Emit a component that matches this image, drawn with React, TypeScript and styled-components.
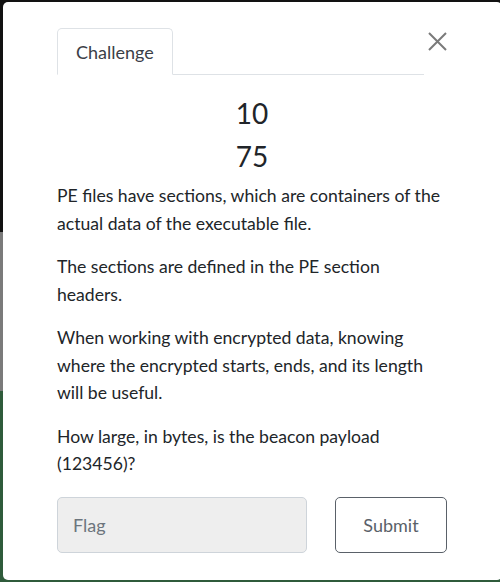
import React from "react";
import styled, { createGlobalStyle } from "styled-components";

const Global = createGlobalStyle`
  html, body { margin: 0; padding: 0; }
  body { font-family: Lato, "Noto Sans", sans-serif; background: #111; }
  * { box-sizing: border-box; }
`;

const Backdrop = styled.div`
  width: 500px;
  height: 582px;
  display: flex;
  padding: 2px 2px 2px 3px;
  background:
    linear-gradient(to bottom, #121212 0px, #121212 232px, #7a7a7a 232px, #7a7a7a 391px, #2f5b3b 391px, #2f5b3b 100%);
`;

const Modal = styled.div`
  flex: 1;
  background: #fff;
  border-radius: 5px;
  padding: 26px 55px 0 54px;
  display: flex;
  flex-direction: column;
  color: #212529;
`;

const Header = styled.div`
  display: flex;
  align-items: flex-start;
`;

const Tabs = styled.div`
  flex: 1;
  display: flex;
  border-bottom: 1px solid #dee2e6;
`;

const Tab = styled.div`
  height: 47px;
  padding: 0 18px;
  margin-bottom: -1px;
  border: 1px solid #dee2e6;
  border-bottom-color: #fff;
  border-radius: 5px 5px 0 0;
  background: #fff;
  display: flex;
  align-items: center;
  font-size: 18px;
  color: #3b4047;
`;

const Close = styled.button`
  width: 26px;
  height: 26px;
  margin-right: -3px;
  padding: 0 3px 0 0;
  border: 0;
  background: transparent;
  display: flex;
  justify-content: flex-end;
  align-items: center;
`;

const Value = styled.div<{ $first?: boolean }>`
  text-align: center;
  font-size: 28px;
  line-height: 1.2;
  margin-top: ${(p) => (p.$first ? "22px" : "0")};
  margin-bottom: 9px;
  color: #212529;
`;

const Text = styled.p`
  margin: 0 0 16px;
  font-size: 17.6px;
  line-height: 27.5px;
  color: #212529;
`;

const Form = styled.div`
  display: flex;
  gap: 28px;
  margin-top: 3px;
`;

const Input = styled.input`
  width: 250px;
  height: 56px;
  padding: 0 15px;
  border: 1px solid #ced4da;
  border-radius: 5px;
  background: #eeeeee;
  font-family: Lato, sans-serif;
  font-size: 18px;
  color: #495057;
  &::placeholder { color: #6c757d; }
`;

const Submit = styled.button`
  width: 112px;
  height: 56px;
  border: 1px solid #5a6169;
  border-radius: 5px;
  background: #fff;
  font-family: Lato, sans-serif;
  font-size: 18px;
  color: #5a6169;
`;

export default function App() {
  return (
    <>
      <Global />
      <Backdrop>
        <Modal>
          <Header>
            <Tabs>
              <Tab>Challenge</Tab>
            </Tabs>
            <Close aria-label="Close">
              <svg width="19" height="19" viewBox="0 0 19 19">
                <path d="M1 1 L18 18 M18 1 L1 18" stroke="#7a7a7a" strokeWidth="2" fill="none" />
              </svg>
            </Close>
          </Header>
          <Value $first>10</Value>
          <Value>75</Value>
          <Text>PE files have sections, which are containers of the actual data of the executable file.</Text>
          <Text>The sections are defined in the PE section headers.</Text>
          <Text>When working with encrypted data, knowing where the encrypted starts, ends, and its length will be useful.</Text>
          <Text>How large, in bytes, is the beacon payload (123456)?</Text>
          <Form>
            <Input placeholder="Flag" />
            <Submit>Submit</Submit>
          </Form>
        </Modal>
      </Backdrop>
    </>
  );
}
